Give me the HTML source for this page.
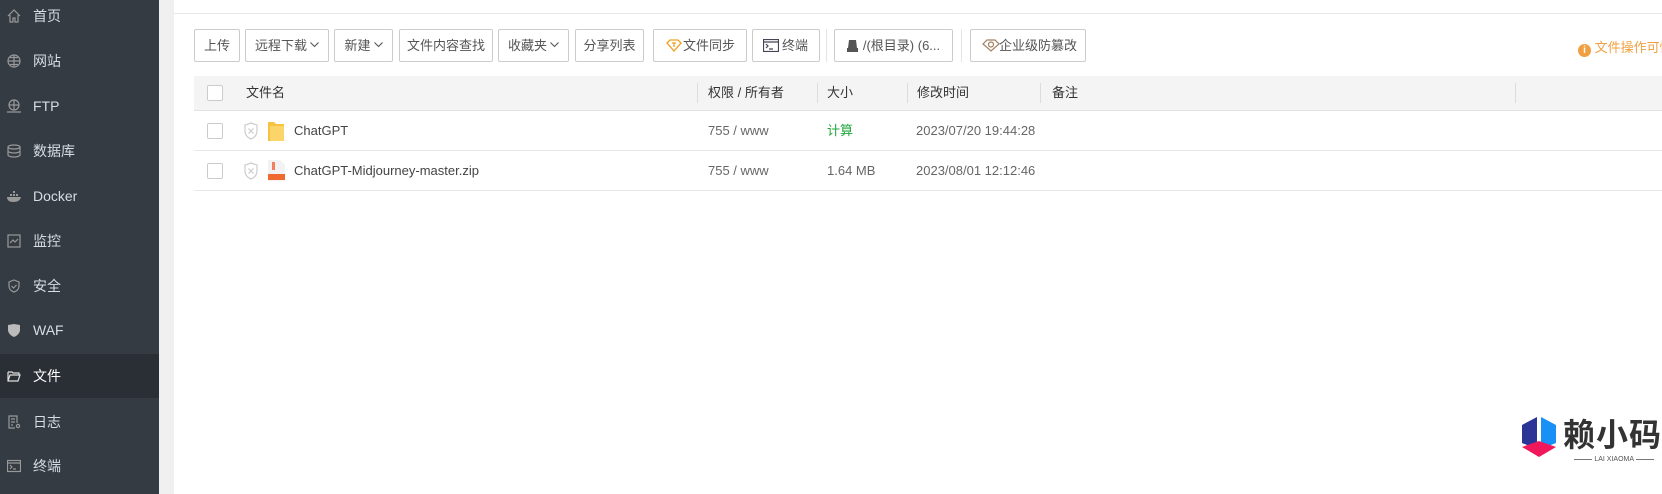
<!DOCTYPE html>
<html><head><meta charset="utf-8"><style>
*{box-sizing:border-box;margin:0;padding:0}
body{width:1662px;height:494px;overflow:hidden;background:#fff;font-family:"Liberation Sans","Noto Sans CJK SC",sans-serif;font-size:13px;color:#333;position:relative}
.side{position:absolute;left:0;top:0;width:159px;height:494px;background:#343b43}
.gap{position:absolute;left:159px;top:0;width:15px;height:494px;background:#f0f0f0}
.it{position:absolute;left:0;width:159px;height:44px;color:#d8dde2;font-size:14px;line-height:44px;padding-left:33px}
.it.act{background:#2a2f36;color:#fff}
.ic{position:absolute;left:7px;top:15px;width:14px;height:14px}
.btn{position:absolute;top:29px;height:33px;border:1px solid #ccc;border-radius:2px;line-height:31px;text-align:center;color:#555;font-size:13px;background:#fff}
.vs{position:absolute;top:29px;width:1px;height:33px;background:#e5e5e5}
.hd{position:absolute;left:194px;top:76px;width:1468px;height:35px;background:#f4f4f4;border-bottom:1px solid #e3e3e3}
.row{position:absolute;left:194px;width:1468px;height:40px;border-bottom:1px solid #e8e8e8}
.t{position:absolute;line-height:20px;color:#666}
.cb{position:absolute;left:13px;width:16px;height:16px;border:1px solid #ccc;border-radius:2px;background:#fff}
.sep{position:absolute;top:5px;width:1px;height:20px;background:#ddd}
.cv{display:inline-block;width:9px;height:6px;margin-left:3px;vertical-align:2px}
</style></head><body>
<div class="side">
<div class="it" style="top:-6px"><svg class="ic" viewBox="0 0 14 14" fill="none" stroke="#999" stroke-width="1.2"><path d="M1 7L7 1l6 6M3 6v7h3V9h2v4h3V6"/></svg>首页</div>
<div class="it" style="top:39px"><svg class="ic" viewBox="0 0 14 14" fill="none" stroke="#999" stroke-width="1.2"><circle cx="7" cy="7" r="6"/><path d="M1 7h12M7 1v12M3 3.5h8M3 10.5h8"/></svg>网站</div>
<div class="it" style="top:84px"><svg class="ic" viewBox="0 0 14 14" fill="none" stroke="#999" stroke-width="1.2"><circle cx="7" cy="6" r="5"/><path d="M2 6h10M7 1v10M0 13h14"/></svg>FTP</div>
<div class="it" style="top:129px"><svg class="ic" viewBox="0 0 14 14" fill="none" stroke="#999" stroke-width="1.2"><ellipse cx="7" cy="3" rx="6" ry="2"/><path d="M1 3v8c0 1 3 2 6 2s6-1 6-2V3M1 7c0 1 3 2 6 2s6-1 6-2"/></svg>数据库</div>
<div class="it" style="top:174px"><svg class="ic" viewBox="0 0 14 14" fill="#999"><path d="M0 8h14c-1 4-4 5-8 5S0 11 0 8zM3 5h2v2H3zM6 5h2v2H6zM6 2h2v2H6zM9 5h2v2H9z"/></svg>Docker</div>
<div class="it" style="top:219px"><svg class="ic" viewBox="0 0 14 14" fill="none" stroke="#999" stroke-width="1.2"><rect x="1" y="1" width="12" height="12"/><path d="M3 9l3-3 2 2 3-3"/></svg>监控</div>
<div class="it" style="top:264px"><svg class="ic" viewBox="0 0 14 14" fill="none" stroke="#999" stroke-width="1.2"><path d="M7 1l5 2v4c0 3-2 5-5 6-3-1-5-3-5-6V3z"/><path d="M4.5 7l2 2 3-3"/></svg>安全</div>
<div class="it" style="top:308px"><svg class="ic" viewBox="0 0 14 14" fill="#bbb"><path d="M1 2l6-1 6 1v5c0 3-3 6-6 7-3-1-6-4-6-7z"/></svg>WAF</div>
<div class="it act" style="top:354px"><svg class="ic" viewBox="0 0 14 14" fill="none" stroke="#ddd" stroke-width="1.2"><path d="M1 3h4l1 1h6v2M1 3v9h10l2-6H3l-2 6"/></svg>文件</div>
<div class="it" style="top:400px"><svg class="ic" viewBox="0 0 14 14" fill="none" stroke="#999" stroke-width="1.2"><path d="M10 8V1H2v12h6M4 4h4M4 7h4M4 10h2"/><circle cx="11" cy="11" r="1.6"/></svg>日志</div>
<div class="it" style="top:444px"><svg class="ic" viewBox="0 0 14 14" fill="none" stroke="#999" stroke-width="1.2"><rect x="0.5" y="1.5" width="13" height="11"/><path d="M.5 4h13M3 6l2 2-2 2M6 10h3"/></svg>终端</div>
</div>
<div class="gap"></div>
<div style="position:absolute;left:174px;top:13px;width:1488px;height:1px;background:#e8e8e8"></div>

<div class="btn" style="left:194px;width:46px">上传</div>
<div class="btn" style="left:245px;width:84px">远程下载<svg class="cv" viewBox="0 0 9 6" fill="none" stroke="#555" stroke-width="1.1"><path d="M.5 .5l4 4 4-4"/></svg></div>
<div class="btn" style="left:334px;width:59px">新建<svg class="cv" viewBox="0 0 9 6" fill="none" stroke="#555" stroke-width="1.1"><path d="M.5 .5l4 4 4-4"/></svg></div>
<div class="btn" style="left:399px;width:94px">文件内容查找</div>
<div class="btn" style="left:498px;width:71px">收藏夹<svg class="cv" viewBox="0 0 9 6" fill="none" stroke="#555" stroke-width="1.1"><path d="M.5 .5l4 4 4-4"/></svg></div>
<div class="btn" style="left:575px;width:69px">分享列表</div>
<div class="btn" style="left:653px;width:94px;padding-left:18px"><svg style="position:absolute;left:12px;top:9px" width="16" height="13" viewBox="0 0 16 13" fill="none" stroke="#f0a020" stroke-width="1.3"><path d="M1 4l3-3h8l3 3-7 8z"/><path d="M6 4h4M8 4v4"/></svg>文件同步</div>
<div class="btn" style="left:752px;width:68px;padding-left:18px"><svg style="position:absolute;left:10px;top:9px" width="16" height="13" viewBox="0 0 16 13" fill="none" stroke="#445" stroke-width="1.2"><rect x=".5" y=".5" width="15" height="12"/><path d="M.5 3h15M3 5l2 2-2 2M6 10h4"/></svg>终端</div>
<div class="vs" style="left:826px"></div>
<div class="btn" style="left:834px;width:119px;padding-left:16px"><svg style="position:absolute;left:11px;top:10px" width="13" height="12" viewBox="0 0 13 12" fill="#555"><path d="M3 0h7l1 8H2z"/><rect x="1" y="8" width="11" height="4"/></svg>/(根目录) (6...</div>
<div class="vs" style="left:961px"></div>
<div class="btn" style="left:970px;width:116px;padding-left:20px"><svg style="position:absolute;left:11px;top:9px" width="18" height="13" viewBox="0 0 18 13" fill="none" stroke="#a08060" stroke-width="1.2"><path d="M1 5l4-4h8l4 4-8 7z"/><circle cx="9" cy="5.5" r="2.5"/></svg>企业级防篡改</div>
<div style="position:absolute;left:1578px;top:37px;color:#f0a040;font-size:13px;white-space:nowrap"><span style="display:inline-block;width:13px;height:13px;border-radius:50%;background:#f0a040;color:#fff;font-size:10px;line-height:13px;text-align:center;font-weight:bold;vertical-align:-1px">i</span> 文件操作可快</div>

<div class="hd">
<div class="cb" style="top:9px"></div>
<div class="t" style="left:52px;top:7px;color:#333">文件名</div>
<div class="sep" style="left:503px;top:7px"></div><div class="t" style="left:514px;top:7px;color:#333">权限 / 所有者</div>
<div class="sep" style="left:623px;top:7px"></div><div class="t" style="left:633px;top:7px;color:#333">大小</div>
<div class="sep" style="left:713px;top:7px"></div><div class="t" style="left:723px;top:7px;color:#333">修改时间</div>
<div class="sep" style="left:846px;top:7px"></div><div class="t" style="left:858px;top:7px;color:#333">备注</div>
<div class="sep" style="left:1321px;top:7px"></div>
</div>

<div class="row" style="top:111px">
<div class="cb" style="top:12px"></div>
<svg style="position:absolute;left:49px;top:11px" width="16" height="18" viewBox="0 0 16 18" fill="none" stroke="#ccc" stroke-width="1.2"><path d="M8 1l6 2v6c0 4-3 7-6 8-3-1-6-4-6-8V3z"/><path d="M5.5 6.5l5 5M10.5 6.5l-5 5"/></svg>
<svg style="position:absolute;left:74px;top:9px" width="16" height="22" viewBox="0 0 16 22"><path d="M0 2h6l2 2h8v17H0z" fill="#f5c242"/><path d="M2 6h14v15H2z" fill="#fbd46a"/></svg>
<div class="t" style="left:100px;top:10px;color:#444">ChatGPT</div>
<div class="t" style="left:514px;top:10px">755 / www</div>
<div class="t" style="left:633px;top:10px;color:#20a53a">计算</div>
<div class="t" style="left:722px;top:10px">2023/07/20 19:44:28</div>
</div>
<div class="row" style="top:151px">
<div class="cb" style="top:12px"></div>
<svg style="position:absolute;left:49px;top:11px" width="16" height="18" viewBox="0 0 16 18" fill="none" stroke="#ccc" stroke-width="1.2"><path d="M8 1l6 2v6c0 4-3 7-6 8-3-1-6-4-6-8V3z"/><path d="M5.5 6.5l5 5M10.5 6.5l-5 5"/></svg>
<svg style="position:absolute;left:74px;top:9px" width="17" height="21" viewBox="0 0 17 21"><path d="M0 0h12l5 5v16H0z" fill="#f2f2f2"/><rect x="4" y="2" width="3" height="8" fill="#f08060"/><rect x="0" y="14" width="17" height="6" fill="#f06a30"/></svg>
<div class="t" style="left:100px;top:10px;color:#444">ChatGPT-Midjourney-master.zip</div>
<div class="t" style="left:514px;top:10px">755 / www</div>
<div class="t" style="left:633px;top:10px">1.64 MB</div>
<div class="t" style="left:722px;top:10px">2023/08/01 12:12:46</div>
</div>

<svg style="position:absolute;left:1520px;top:417px" width="40" height="44" viewBox="0 0 40 44"><path d="M17 0L2 8v18l15 6z" fill="#2b3596"/><path d="M21 0l15 8v18l-15 6z" fill="#1890f5"/><path d="M2 30l17-6 17 6-17 10z" fill="#f0185a"/></svg>
<div style="position:absolute;left:1563px;top:413px;font-size:32px;font-weight:bold;color:#333;line-height:40px;letter-spacing:1px;font-family:'Noto Sans CJK SC',sans-serif">赖小码</div>
<div style="position:absolute;left:1566px;top:456px;width:96px;font-size:7px;color:#555;text-align:center;line-height:8px"><span style="display:inline-block;width:18px;height:1px;background:#777;vertical-align:middle"></span> LAI XIAOMA <span style="display:inline-block;width:18px;height:1px;background:#777;vertical-align:middle"></span></div>
</body></html>
